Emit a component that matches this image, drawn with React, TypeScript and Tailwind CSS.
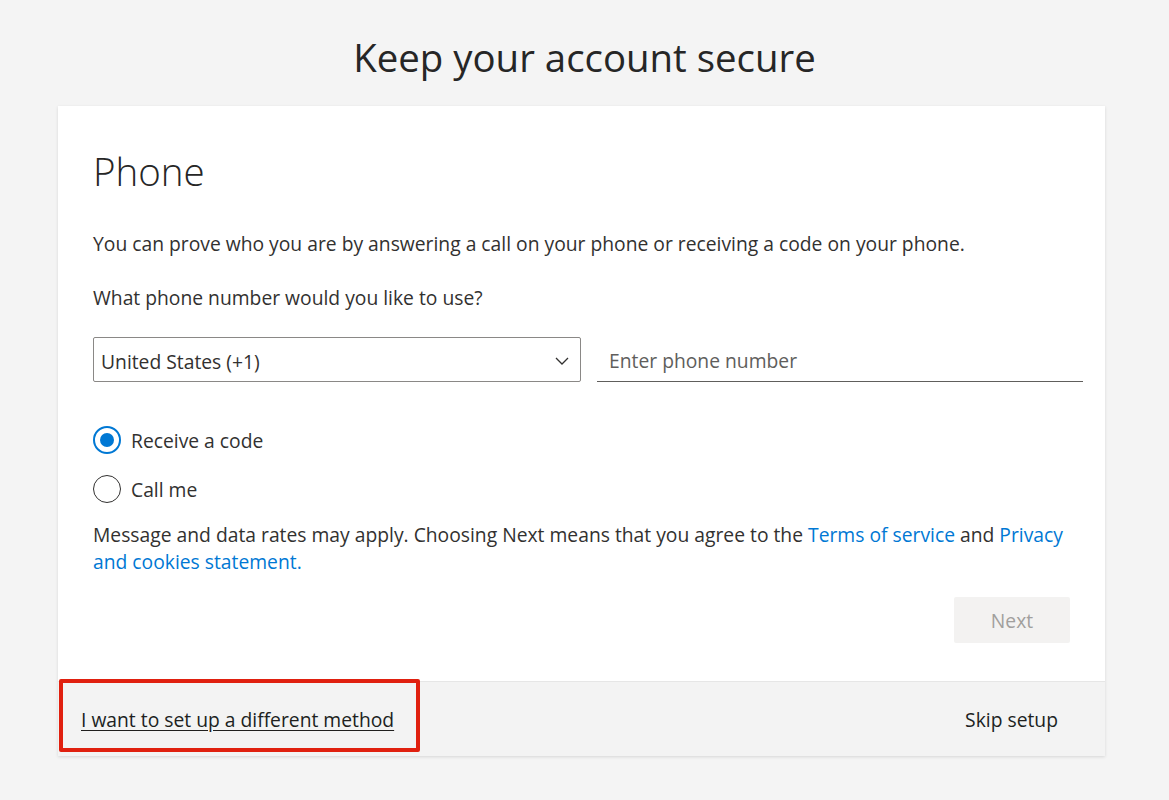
import React from "react";

export default function App() {
  return (
    <div className="min-h-screen w-full bg-[#f4f4f4] font-['Open_Sans',sans-serif] text-[#323130]">
      <h1 className="pt-[33px] text-center text-[38.4px] leading-[48px] font-normal text-[#262626]">
        Keep your account secure
      </h1>
      <div className="ml-[58px] mt-[25px] w-[1047px] bg-white shadow-[0_1px_3px_rgba(0,0,0,0.12)]">
        <div className="pl-[35px] pr-[22px] pt-[37px] pb-[38px]">
          <h2 className="text-[38.5px] leading-[56px] font-light text-[#262626]">Phone</h2>
          <p className="mt-[31px] text-[19.3px] leading-[27px]">
            You can prove who you are by answering a call on your phone or receiving a code on your phone.
          </p>
          <p className="mt-[27px] text-[19.3px] leading-[27px]">What phone number would you like to use?</p>
          <div className="mt-[26px] flex items-start gap-[16px]">
            <div className="flex h-[45px] w-[488px] items-center justify-between rounded-[2px] border border-[#8a8886] pl-[7px] pr-[11px] text-[19.3px]">
              <span className="pt-[5px]">United States (+1)</span>
              <svg width="14" height="8" viewBox="0 0 14 8" fill="none" className="mt-[2px]">
                <path d="M1 1l6 6 6-6" stroke="#323130" strokeWidth="1.3" />
              </svg>
            </div>
            <div className="flex h-[45px] w-[486px] items-center border-b border-[#605e5c] pl-[12px] pt-[5px] text-[19.3px] text-[#605e5c]">
              Enter phone number
            </div>
          </div>
          <div className="mt-[44px] flex h-[28px] items-center gap-[10px] text-[19.3px]">
            <span className="flex h-[28px] w-[28px] items-center justify-center rounded-full border-2 border-[#0078d4]">
              <span className="h-[14px] w-[14px] rounded-full bg-[#0078d4]" />
            </span>
            <span className="h-[28px] pt-[2px] leading-[26px]">Receive a code</span>
          </div>
          <div className="mt-[21px] flex h-[28px] items-center gap-[10px] text-[19.3px]">
            <span className="h-[28px] w-[28px] rounded-full border-[1.5px] border-[#323130]" />
            <span className="h-[28px] pt-[2px] leading-[26px]">Call me</span>
          </div>
          <p className="mt-[18px] pr-[10px] text-[19.3px] leading-[27px]">
            Message and data rates may apply. Choosing Next means that you agree to the{" "}
            <a className="text-[#0078d4]">Terms of service</a> and{" "}
            <a className="text-[#0078d4]">Privacy and cookies statement.</a>
          </p>
          <div className="mt-[22px] flex justify-end pr-[13px]">
            <button className="h-[46px] w-[116px] rounded-[2px] bg-[#f3f2f1] pt-[3px] text-[19.3px] text-[#a19f9d]">Next</button>
          </div>
        </div>
        <div className="relative flex h-[75px] items-center justify-between border-t border-[#e6e6e6] bg-[#f3f3f3] pl-[23px] pr-[47px] pt-[3px] text-[19.3px]">
          <span className="underline underline-offset-[3px] text-[#201f1e]">I want to set up a different method</span>
          <span className="text-[#201f1e]">Skip setup</span>
          <div className="pointer-events-none absolute left-[1px] top-[-3px] h-[73px] w-[361px] rounded-[2px] border-[4px] border-[#e0200f]" />
        </div>
      </div>
    </div>
  );
}
